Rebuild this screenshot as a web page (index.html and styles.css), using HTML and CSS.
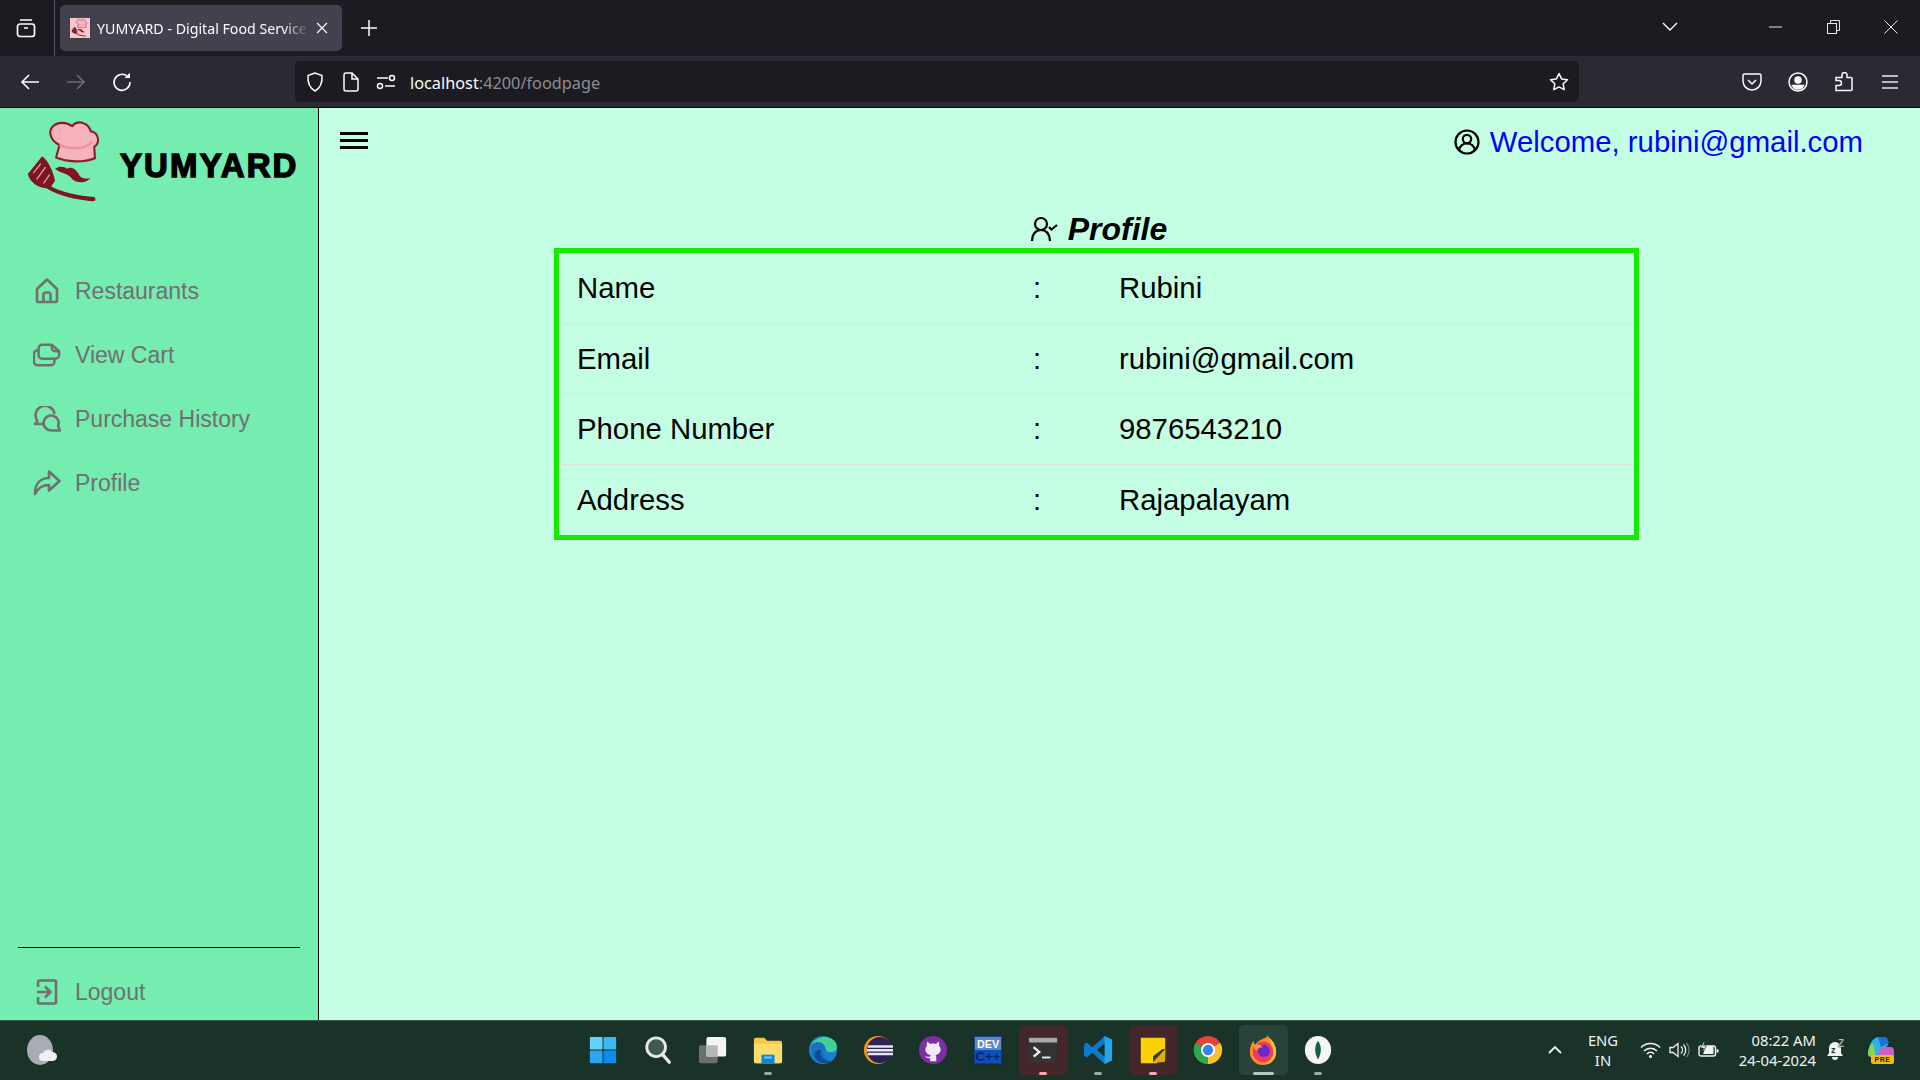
FILE: index.html
```html
<!DOCTYPE html>
<html lang="en">
<head>
<meta charset="utf-8">
<title>YUMYARD - Digital Food Service</title>
<link rel="stylesheet" href="styles.css">
</head>
<body>
<svg class="defs" width="0" height="0" aria-hidden="true">
  <symbol id="logo" viewBox="0 0 270 270">
    <path d="M103 122L113 85C90 75 78 50 92 32C108 15 135 18 150 30C165 12 195 15 205 45C230 50 232 80 215 90L217 124C180 138 135 135 103 122Z" fill="#f6b3bb" stroke="#8d1a2a" stroke-width="6" stroke-linejoin="round"/>
    <path d="M113 85C145 100 190 98 210 75" fill="none" stroke="#ec95a2" stroke-width="7"/>
    <path d="M62 118L20 170C25 195 55 215 85 212L100 190C95 165 80 130 62 118Z" fill="#7f1423"/>
    <path d="M58 140L36 168M72 150L46 186M84 172L66 198" stroke="#dfb0b0" stroke-width="3.500" fill="none"/>
    <path d="M85 205C120 225 170 235 215 238C222 245 218 252 208 250C160 245 110 235 75 212Z" fill="#7f1423"/>
    <path d="M100 155C112 145 128 148 135 155C150 145 165 160 172 175C180 185 195 185 205 182C190 198 165 198 150 185C140 168 118 170 100 155Z" fill="#7f1423"/>
  </symbol>
</svg>

<header class="tabstrip">
  <span class="tb-icon tabs-btn"><svg width="20" height="20" viewBox="0 0 20 20" fill="none" stroke="#fbfbfe" stroke-width="1.7"><rect x="1.500" y="6" width="17" height="12.500" rx="2.500"/><path d="M4 2h12M8 10h4"/></svg></span>
  <div class="tab">
    <svg class="favicon" width="20" height="20" viewBox="0 0 20 20"><rect width="20" height="20" fill="#f9c6cb"/><use href="#logo" x="0" y="0" width="20" height="20"/></svg>
    <span class="tab-title">YUMYARD - Digital Food Service</span>
    <svg width="12" height="12" viewBox="0 0 12 12" stroke="#fbfbfe" stroke-width="1.2"><path d="M1 1l10 10M11 1L1 11"/></svg>
  </div>
  <span class="tb-icon newtab"><svg width="16" height="16" viewBox="0 0 16 16" stroke="#fbfbfe" stroke-width="1.5"><path d="M8 0v16M0 8h16"/></svg></span>
  <div class="grow"></div>
  <span class="win list"><svg width="16" height="10" viewBox="0 0 16 10" fill="none" stroke="#fbfbfe" stroke-width="1.4"><path d="M1 1l7 7 7-7"/></svg></span>
  <span class="win"><svg width="13" height="2" viewBox="0 0 13 2"><path d="M0 1h13" stroke="#e6e6e6" stroke-width="1"/></svg></span>
  <span class="win"><svg width="13" height="14" viewBox="0 0 13 14" fill="none" stroke="#e6e6e6"><rect x=".5" y="3.500" width="9" height="10"/><path d="M3.500 3V.5h9v10H10"/></svg></span>
  <span class="win"><svg width="14" height="14" viewBox="0 0 14 14" stroke="#e6e6e6"><path d="M.5.5l13 13M13.500.5l-13 13"/></svg></span>
</header>

<nav class="toolbar">
  <span class="tool"><svg width="20" height="18" viewBox="0 0 20 18" fill="none" stroke="#fbfbfe" stroke-width="1.6"><path d="M19 9H2M9 2L2 9l7 7"/></svg></span>
  <span class="tool"><svg width="20" height="18" viewBox="0 0 20 18" fill="none" stroke="#6c6c72" stroke-width="1.6"><path d="M1 9h17M11 2l7 7-7 7"/></svg></span>
  <span class="tool"><svg width="20" height="20" viewBox="0 0 20 20" fill="none" stroke="#fbfbfe" stroke-width="1.6"><path d="M15.500 4.500A8 8 0 1 0 18 10"/><path d="M12.500 6H18V.8z" fill="#fbfbfe" stroke="none"/></svg></span>
  <div class="urlbar">
    <svg class="u-shield" width="18" height="20" viewBox="0 0 18 20" fill="none" stroke="#fbfbfe" stroke-width="1.5"><path d="M9 1L2 3.500C1.500 11 3.500 16 9 19c5.500-3 7.500-8 7-15.500z"/></svg>
    <svg class="u-doc" width="16" height="20" viewBox="0 0 16 20" fill="none" stroke="#fbfbfe" stroke-width="1.5"><path d="M3 1h6l6 6v10a2 2 0 0 1-2 2H3a2 2 0 0 1-2-2V3a2 2 0 0 1 2-2zM9 1v6h6"/></svg>
    <svg class="u-perm" width="20" height="16" viewBox="0 0 20 16" fill="none" stroke="#fbfbfe" stroke-width="1.500"><path d="M1 4h11M9 12h10"/><circle cx="16" cy="4" r="2.500"/><circle cx="4" cy="12" r="2.500"/></svg>
    <span class="url"><span class="url-host">localhost</span>:4200/foodpage</span>
    <span class="grow"></span>
    <svg class="u-star" width="20" height="20" viewBox="0 0 20 20" fill="none" stroke="#fbfbfe" stroke-width="1.5"><path d="M10 1.500l2.600 5.400 5.900.8-4.300 4.100 1 5.900L10 14.900l-5.200 2.800 1-5.900L1.500 7.700l5.900-.8z" stroke-linejoin="round"/></svg>
  </div>
  <div class="grow"></div>
  <span class="tool"><svg width="20" height="20" viewBox="0 0 20 20" fill="none" stroke="#fbfbfe" stroke-width="1.5"><path d="M2.500 2h15A1.500 1.500 0 0 1 19 3.500V9a9 9 0 0 1-18 0V3.500A1.500 1.500 0 0 1 2.500 2zM6 8l4 4 4-4"/></svg></span>
  <span class="tool"><svg width="20" height="20" viewBox="0 0 20 20" fill="none" stroke="#fbfbfe" stroke-width="1.500"><circle cx="10" cy="10" r="9"/><circle cx="10" cy="8" r="3" fill="#fbfbfe"/><path d="M4.500 13.500h11A6 6 0 0 1 4.500 13.500z" fill="#fbfbfe"/></svg></span>
  <span class="tool"><svg width="20" height="20" viewBox="0 0 20 20" fill="none" stroke="#fbfbfe" stroke-width="1.500"><path d="M2 19v-5h3a2 2 0 0 0 0-5H2V6h6V3.500a2.500 2.500 0 0 1 5 0V6h4a1 1 0 0 1 1 1v11a1 1 0 0 1-1 1z" transform="translate(0 -.5)"/></svg></span>
  <span class="tool"><svg width="18" height="16" viewBox="0 0 18 16" stroke="#e8e8ec" stroke-width="1.600"><path d="M1 2h16M1 8h16M1 14h16"/></svg></span>
</nav>

<div class="page">
  <aside class="sidebar">
    <div class="brand">
      <svg class="brand-logo" width="92" height="92"><use href="#logo"/></svg>
      <span class="brand-name">YUMYARD</span>
    </div>
    <ul class="menu">
      <li class="menu-item">
        <svg class="menu-icon" viewBox="0 0 26 26" fill="none" stroke="#707070" stroke-width="2.600" stroke-linejoin="round"><path d="M3 11L13 1.500 23 11v12a1 1 0 0 1-1 1H4a1 1 0 0 1-1-1z"/><path d="M9.500 24v-7a2.500 2.500 0 0 1 2.500-2.500h2a2.500 2.500 0 0 1 2.500 2.500v7"/></svg>
        <span>Restaurants</span>
      </li>
      <li class="menu-item">
        <svg class="menu-icon" viewBox="0 0 30 26" fill="none" stroke="#707070" stroke-width="2.600" stroke-linejoin="round"><path d="M10 2h10l8 7v4a4 4 0 0 1-4 4H10a4 4 0 0 1-4-4V6a4 4 0 0 1 4-4zM20 2v3a4 4 0 0 0 4 4h4"/><path d="M6 8H5a4 4 0 0 0-4 4v8a4 4 0 0 0 4 4h14a4 4 0 0 0 4-4v-3"/></svg>
        <span>View Cart</span>
      </li>
      <li class="menu-item">
        <svg class="menu-icon" viewBox="0 0 28 26" fill="none" stroke="#707070" stroke-width="2.600" stroke-linejoin="round"><path d="M10 18H2l2.500-3A9.500 9.500 0 1 1 21.500 8"/><circle cx="18" cy="16.500" r="7.500" fill="#75ecb0" stroke="none"/><path d="M27 24.500h-9a7.500 7.500 0 1 1 7-4.500z"/></svg>
        <span>Purchase History</span>
      </li>
      <li class="menu-item">
        <svg class="menu-icon" viewBox="0 0 28 26" fill="none" stroke="#707070" stroke-width="2.600" stroke-linejoin="round"><path d="M16 1.500L26.500 11 16 20.500V15C9 15 5 18 2 24c0-10 5-16 14-16z"/></svg>
        <span>Profile</span>
      </li>
    </ul>
    <div class="grow"></div>
    <hr class="side-rule">
    <div class="menu-item logout">
      <svg class="menu-icon" viewBox="0 0 26 26" fill="none" stroke="#707070" stroke-width="2.600"><path d="M4 8V3a1.500 1.500 0 0 1 1.500-1.500h15A1.500 1.500 0 0 1 22 3v20a1.500 1.500 0 0 1-1.500 1.500h-15A1.500 1.500 0 0 1 4 23v-5"/><path d="M3 13h13M11 7.500l5.500 5.500-5.500 5.500"/></svg>
      <span>Logout</span>
    </div>
  </aside>

  <main class="main">
    <div class="topbar">
      <span class="burger"><i></i><i></i><i></i></span>
      <span class="welcome">
        <svg width="26" height="26" viewBox="0 0 26 26" fill="none" stroke="#000" stroke-width="2.200"><circle cx="13" cy="13" r="11.500"/><circle cx="13" cy="10" r="4.200"/><path d="M5 21c1-4 4-6.500 8-6.500s7 2.500 8 6.500"/></svg>
        <span class="welcome-text">Welcome, rubini@gmail.com</span>
      </span>
    </div>
    <h2 class="title">
      <svg width="28" height="26" viewBox="0 0 28 26" fill="none" stroke="#000" stroke-width="2.200"><circle cx="11" cy="8" r="6"/><path d="M2 25c0-6 3-11 9-11s9 5 9 11M19 11l2.500 2.500L27 9"/></svg>
      <span>Profile</span>
    </h2>
    <table class="profile">
      <tr><td class="k">Name</td><td class="c">:</td><td>Rubini</td></tr>
      <tr><td class="k">Email</td><td class="c">:</td><td>rubini@gmail.com</td></tr>
      <tr><td class="k">Phone Number</td><td class="c">:</td><td>9876543210</td></tr>
      <tr><td class="k">Address</td><td class="c">:</td><td>Rajapalayam</td></tr>
    </table>
  </main>
</div>

<footer class="taskbar">
  <div class="tb-left">
    <svg width="32" height="32" viewBox="0 0 32 32"><ellipse cx="13" cy="16" rx="13" ry="15" fill="#a9adb3"/><path d="M16 27a4 4 0 0 1 0-8 5 5 0 0 1 9-1 4.500 4.500 0 0 1 1 9z" fill="#eef0f2"/></svg>
  </div>
  <div class="tb-center">
    <span class="app"><svg viewBox="0 0 32 32"><rect x="2" y="2" width="13.500" height="13.500" rx="1" fill="#5fd5fb"/><rect x="16.500" y="2" width="13.500" height="13.500" rx="1" fill="#3bb8f6"/><rect x="2" y="16.500" width="13.500" height="13.500" rx="1" fill="#2ba6f3"/><rect x="16.500" y="16.500" width="13.500" height="13.500" rx="1" fill="#0f8bee"/></svg></span>
    <span class="app"><svg viewBox="0 0 32 32" fill="none"><circle cx="14" cy="13" r="10" fill="#3e5a50" stroke="#e8e8e8" stroke-width="3"/><path d="M21 21l7 8" stroke="#e8e8e8" stroke-width="3.500" stroke-linecap="round"/></svg></span>
    <span class="app"><svg viewBox="0 0 32 32"><rect x="1" y="11" width="20" height="19" rx="2" fill="#6b6f6d"/><rect x="9" y="2" width="21" height="21" rx="2" fill="#f4f4f4"/><rect x="9" y="11" width="12" height="12" fill="#b5b8b7"/></svg></span>
    <span class="app dot"><svg viewBox="0 0 32 32"><path d="M1 5a2 2 0 0 1 2-2h9l3 3h14a2 2 0 0 1 2 2v20a2 2 0 0 1-2 2H3a2 2 0 0 1-2-2z" fill="#f6c644"/><path d="M1 9h30v19a2 2 0 0 1-2 2H3a2 2 0 0 1-2-2z" fill="#fbdc6c"/><rect x="9" y="21" width="14" height="9" fill="#0f86d8"/><rect x="12" y="23" width="8" height="2" fill="#7dd0f5"/></svg></span>
    <span class="app"><svg viewBox="0 0 32 32"><circle cx="16" cy="16" r="15" fill="#1b7fd0"/><path d="M3 10C7 2 20-1 28 6c4 4 4 11-1 12-5 1-9 0-10-3-2 4 0 11 8 13-9 5-20 0-21-9-1-5 0-7 1-9" fill="#1b6fc0"/><path d="M2 12C7 2 20-1 28 6c4 4 4 11-1 12-4 1-7 0-8-2 0-6-6-10-11-8-3 1-5 2-6 4z" fill="#3ed29a"/><path d="M14 16c-2 6 2 11 11 12-6 4-15 2-18-5-1-4 3-8 7-7z" fill="#0c4d96"/></svg></span>
    <span class="app"><svg viewBox="0 0 32 32"><circle cx="16" cy="16" r="15" fill="#f7941e"/><circle cx="18" cy="16" r="14" fill="#2c2255"/><path d="M5 11h27v2.500H5zM4 15h28v2.500H4zM5 19h27v2.500H5z" fill="#e8e4f0"/></svg></span>
    <span class="app"><svg viewBox="0 0 32 32"><circle cx="16" cy="16" r="15" fill="#7b2fa0"/><path d="M10 7L13 9.500C15 9 17 9 19 9.500L22 7C22.800 9 22.800 10.500 22.500 11.500C24 13 24.500 15 24 17C23 20 20.500 21 18.500 21.300C19.500 22 19.500 23 19.500 24V28H13V24.500C10 25.500 8.500 24 7.500 22.500C9 23 10.500 24 13 23C13 22 13 21.500 13.500 21.300C11.500 21 9 20 8 17C7.500 15 8 13 9.500 11.500C9.200 10.500 9.200 9 10 7Z" fill="#f1e9f5"/></svg></span>
    <span class="app"><svg viewBox="0 0 32 32"><rect x="1" y="1" width="30" height="30" rx="1" fill="#0b4fb8" stroke="#16233a"/><rect x="2" y="2" width="28" height="14" fill="#5e86c6"/><text x="16" y="14" class="dev-a">DEV</text><text x="16" y="28" class="dev-b">C++</text></svg></span>
    <span class="app tile-red dot pink"><svg viewBox="0 0 32 32"><rect x="1" y="3" width="30" height="26" rx="1" fill="#333"/><rect x="1" y="3" width="30" height="5" fill="#a8a8a8"/><path d="M6 13l6 5-6 5" stroke="#eee" stroke-width="2.500" fill="none"/><path d="M15 24h9" stroke="#eee" stroke-width="2"/></svg></span>
    <span class="app dot"><svg viewBox="0 0 32 32"><path d="M23 1l8 4v22l-8 4-13-12-6 5-3-2v-12l3-2 6 5z" fill="#0e78c9"/><path d="M23 1l8 4v22l-8 4z" fill="#26a6ea"/><path d="M23 9l-8 7 8 7z" fill="#18302a"/></svg></span>
    <span class="app tile-red dot pink"><svg viewBox="0 0 32 32"><path d="M3 3h26v18l-9 9H3z" fill="#fdd205"/><path d="M29 15v11a3 3 0 0 1-3 3H16V23z" fill="#e3ae00"/><path d="M16 23l13-8v0l-9 8z" fill="#333"/><path d="M16 23l10-8h3l-13 14z" fill="#3a3a3a"/></svg></span>
    <span class="app"><svg viewBox="0 0 32 32"><circle cx="16" cy="16" r="15" fill="#e0453a"/><path d="M16 16L29 8.500A15 15 0 0 1 16 31z" fill="#fbc02d"/><path d="M16 16L16 31A15 15 0 0 1 2.800 8.500z" fill="#2fa650"/><circle cx="16" cy="16" r="7.500" fill="#fff"/><circle cx="16" cy="16" r="5.500" fill="#3b82f0"/></svg></span>
    <span class="app tile-fx"><svg viewBox="0 0 32 32"><path d="M21 0c1 4 9 8 9 18a14 14 0 0 1-28 0c0-6 2-10 4-12 0 3 1 4 2 5 1-4 6-6 8-7 3-1 5-2 5-4z" fill="#ff8a26"/><path d="M23 3c3 3 7 8 7 15 0 6-4 12-10 13 6-4 7-13 3-28z" fill="#fdc62d"/><circle cx="16" cy="18" r="11" fill="#ef3a68"/><circle cx="17" cy="17" r="6.500" fill="#6a2bc4"/><path d="M7 10c4-1 7 1 9 3-3 0-6 1-7 4-2-2-3-4-2-7z" fill="#ff9c2a"/></svg></span>
    <span class="app dot"><svg viewBox="0 0 32 32"><ellipse cx="16" cy="16" rx="14" ry="15" fill="#f5f6f4"/><path d="M16 6c4 5 4 13 0 20-4-7-4-15 0-20z" fill="#116149"/></svg></span>
  </div>
  <div class="tb-right">
    <svg class="chev" width="14" height="9" viewBox="0 0 14 9" fill="none" stroke="#f2f2f2" stroke-width="1.800"><path d="M1 8l6-6 6 6"/></svg>
    <span class="lang">ENG<br>IN</span>
    <span class="tray">
      <svg width="21" height="16" viewBox="0 0 21 16" fill="none" stroke="#f2f2f2" stroke-width="1.500"><path d="M1 5.500a13.500 13.500 0 0 1 19 0M4 9a9 9 0 0 1 13 0M7 12a4.500 4.500 0 0 1 7 0"/><circle cx="10.500" cy="14.500" r=".8" fill="#f2f2f2"/></svg>
      <svg width="21" height="16" viewBox="0 0 21 16" fill="none" stroke="#f2f2f2" stroke-width="1.300"><path d="M1 5.500h3L9 1.500v13l-5-4H1z"/><path d="M12 4.500a5 5 0 0 1 0 7M14.500 2.500a8 8 0 0 1 0 11"/><path d="M17.500 1a11 11 0 0 1 0 14" stroke="#6e7c77"/></svg>
      <svg width="21" height="16" viewBox="0 0 21 16" fill="none" stroke="#f2f2f2" stroke-width="1.400"><rect x="1" y="4" width="16.500" height="10" rx="2"/><path d="M19.500 7.500v3" stroke-width="2"/><path d="M8 4h7.500v8H5z" fill="#f2f2f2" stroke="none"/><path d="M5.500 0L2.500 6h3l-1 4 4-6h-3l1-4z" fill="#f2f2f2" stroke="#18352a" stroke-width=".6"/></svg>
    </span>
    <span class="clock">08:22 AM<br>24-04-2024</span>
    <svg class="bell" width="20" height="22" viewBox="0 0 20 22"><path d="M9 3a6 6 0 0 0-6 6v5l-2 3h16l-2-3V9a6 6 0 0 0-6-6z" fill="#f2f2f2"/><path d="M6 18a3 3 0 0 0 6 0z" fill="#f2f2f2"/><text x="5" y="14" class="zz">z</text><text x="12" y="8" class="zz zz-up">Z</text></svg>
    <svg class="copilot" width="30" height="30" viewBox="0 0 30 30"><path d="M3 20C3 10 8 2 14 2h6l3 8-12 12H5z" fill="#2db2e8"/><path d="M3 20c0-6 2-10 5-12l3 14H6z" fill="#8bd250"/><path d="M13 2h7c2 0 3 2 4 6l-8 4z" fill="#1f6fd8"/><path d="M16 12h10c2 0 3 2 3 5v5l-17 2z" fill="#d05cc6"/><rect x="6" y="20" width="23" height="9" rx="2" fill="#f5b916"/><text x="17.500" y="27.300" class="pre">PRE</text></svg>
  </div>
</footer>
</body>
</html>
```

FILE: styles.css
```css
* { box-sizing: border-box; }
html, body { height: 100%; }
body {
  margin: 0;
  height: 1080px;
  display: flex;
  flex-direction: column;
  overflow: hidden;
  font-family: "Liberation Sans", Arial, sans-serif;
  background: #c4ffe4;
}
.defs { position: absolute; }
.grow { flex: 1; }

/* browser tab strip */
.tabstrip {
  height: 56px;
  flex: none;
  background: #1c1b22;
  display: flex;
  align-items: flex-start;
}
.tb-icon { display: flex; align-items: center; justify-content: center; height: 56px; }
.tabs-btn { width: 55px; padding-right: 3px; border-right: 1px solid #55545c; }
.newtab { width: 54px; }
.tab {
  width: 282px;
  height: 46px;
  margin: 5px 0 0 5px;
  background: #42414d;
  border-radius: 5px;
  display: flex;
  align-items: center;
  padding: 0 14px 0 10px;
  gap: 7px;
  color: #fbfbfe;
}
.favicon { flex: none; }
.tab-title {
  flex: 1;
  font: 14.2px "Noto Sans", sans-serif;
  white-space: nowrap;
  overflow: hidden;
  -webkit-mask-image: linear-gradient(to right, #000 88%, transparent);
  mask-image: linear-gradient(to right, #000 88%, transparent);
}
.win { width: 58px; height: 54px; display: flex; align-items: center; justify-content: center; }
.win.list { margin-right: 47px; }

/* browser toolbar */
.toolbar {
  height: 52px;
  flex: none;
  background: #2b2a33;
  border-bottom: 1px solid #0b0b0f;
  display: flex;
  align-items: center;
  padding: 0 7px;
}
.tool { width: 46px; height: 40px; display: flex; align-items: center; justify-content: center; }
.urlbar {
  width: 1284px;
  height: 41px;
  margin-left: 150px;
  background: #1c1b22;
  border-radius: 5px;
  display: flex;
  align-items: center;
  padding: 0 10px 0 11px;
}
.u-doc { margin-left: 19px; }
.u-perm { margin-left: 17px; }
.url { margin: 2px 0 0 14px; font: 16.3px "Noto Sans", sans-serif; color: #8e8d93; }
.url-host { color: #fbfbfe; }

/* page */
.page { flex: 1; min-height: 0; display: flex; }
.sidebar {
  width: 319px;
  flex: none;
  background: #75ecb0;
  border-right: 1px solid #000;
  display: flex;
  flex-direction: column;
}
.brand { height: 151px; display: flex; align-items: flex-start; padding: 8px 0 0 21px; }
.brand-name {
  margin: 32px 0 0 7px;
  font-size: 33px;
  font-weight: 700;
  line-height: 36px;
  letter-spacing: 2.1px;
  color: #000;
  -webkit-text-stroke: 1.4px #000;
}
.menu { list-style: none; margin: 0; padding: 0; }
.menu-item {
  height: 64px;
  display: flex;
  align-items: center;
  padding-left: 33px;
  gap: 14px;
  font-size: 23px;
  color: #707070;
}
.menu-icon { width: 28px; height: 26px; flex: none; }
.side-rule { width: 282px; margin: 0 0 0 18px; border: 0; border-top: 1px solid #000; }
.logout { margin-top: 16px; height: 56px; }

.main { flex: 1; padding: 0 281px 0 235px; }
.topbar {
  height: 68px;
  margin: 0 -281px 0 -235px;
  padding: 0 57px 0 21px;
  display: flex;
  align-items: center;
  justify-content: space-between;
}
.burger { display: flex; flex-direction: column; gap: 4px; width: 28px; margin-bottom: 3px; }
.burger i { display: block; height: 3px; background: #000; }
.welcome { display: flex; align-items: center; gap: 10px; }
.welcome-text { font-size: 29.33px; color: #0000ff; }
.title {
  margin: 0;
  height: 72px;
  padding-left: 4px;
  display: flex;
  align-items: flex-end;
  justify-content: center;
  gap: 10px;
  font-size: 32px;
  font-style: italic;
  font-weight: 700;
  color: #000;
}
.title span { line-height: 37px; }
.title svg { margin-bottom: 6px; }
.profile {
  width: 100%;
  border: 5px solid #19e800;
  border-collapse: separate;
  border-spacing: 0;
  font-size: 29.33px;
  color: #000;
}
.profile td { height: 70.5px; padding: 1px 0 0 18px; border-bottom: 1px solid #dfe3e0; vertical-align: middle; }
.profile tr:last-child td { border-bottom: 0; }
.profile .k { width: 456px; }
.profile .c { width: 86px; }

/* Windows taskbar */
.taskbar {
  height: 60px;
  flex: none;
  background: #193328;
  border-top: 1px solid #3c5a4e;
  padding-bottom: 2px;
  display: grid;
  grid-template-columns: 1fr auto 1fr;
  align-items: center;
  color: #f2f2f2;
}
.tb-left { padding-left: 27px; display: flex; }
.tb-center { display: flex; align-items: center; margin-left: 1px; }
.app {
  width: 55px;
  height: 50px;
  position: relative;
  display: flex;
  align-items: center;
  justify-content: center;
  border-radius: 5px;
}
.app svg { width: 30px; height: 30px; position: relative; }
.app.dot::after {
  content: "";
  position: absolute;
  left: 23px;
  bottom: 0;
  width: 8px;
  height: 3px;
  border-radius: 2px;
  background: #9aa9a3;
}
.app.pink::after { background: #f9a6b4; }
.tile-red::before, .tile-fx::before {
  content: "";
  position: absolute;
  top: 0;
  bottom: 0;
  left: 3px;
  right: 3px;
  border-radius: 5px;
  background: #43272b;
}
.tile-fx::before { background: #27433a; }
.tile-fx::after {
  content: "";
  position: absolute;
  left: 17px;
  bottom: 0;
  width: 21px;
  height: 3px;
  border-radius: 2px;
  background: #b5c6bf;
}
.dev-a, .dev-b { font: 700 11.5px "Liberation Sans", sans-serif; text-anchor: middle; }
.dev-a { fill: #fff; }
.dev-b { fill: #03246a; font-size: 14px; }
.tb-right { display: flex; align-items: center; justify-content: flex-end; padding-right: 25px; }
.chev { margin-right: 24px; }
.lang, .clock { font: 14.8px/20px "Noto Sans", sans-serif; }
.lang { text-align: center; width: 34px; margin-right: 20px; }
.tray { display: flex; gap: 8px; margin-right: 11px; }
.clock { text-align: right; width: 86px; margin-right: 10px; }
.bell { margin-right: 19px; }
.zz { font: 700 9px "Liberation Sans", sans-serif; fill: #193328; }
.zz-up { font-size: 10px; fill: #f2f2f2; stroke: #193328; stroke-width: .5px; }
.pre { font: 700 7px "Liberation Sans", sans-serif; text-anchor: middle; fill: #222; letter-spacing: .5px; }
```
